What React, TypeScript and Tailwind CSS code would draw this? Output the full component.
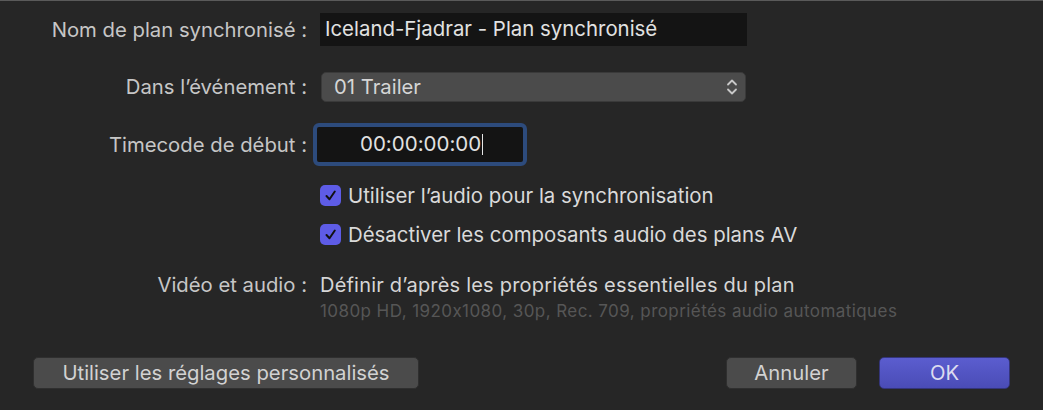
import React from "react";

const font = { fontFamily: "Inter, 'Noto Sans', sans-serif" };

function Label({ children }: { children: React.ReactNode }) {
  return (
    <div className="w-[307px] shrink-0 text-right text-[20.3px] leading-[24px] text-[#c6c6c6]">
      {children}
    </div>
  );
}

function Check({ label }: { label: string }) {
  return (
    <div className="flex h-[21px] items-center pl-[320px]">
      <span className="flex h-[21px] w-[21px] items-center justify-center rounded-[5px] bg-[#5e5ce6]">
        <svg width="13" height="13" viewBox="0 0 13 13" fill="none">
          <path d="M2.5 7l3 3.2L10.8 2.5" stroke="#111" strokeWidth="2" strokeLinecap="round" strokeLinejoin="round" />
        </svg>
      </span>
      <span className="ml-[7px] text-[20.4px] leading-[24px] text-[#dadada]">{label}</span>
    </div>
  );
}

export default function App() {
  return (
    <div
      style={font}
      className="flex h-[410px] w-[1043px] flex-col overflow-hidden border-t border-[#5a5a5a] bg-[#262626] antialiased [font-feature-settings:'calt'_0]"
    >
      {/* Nom de plan */}
      <div className="mt-[12px] flex h-[33px] items-center">
        <Label>Nom de plan synchronisé :</Label>
        <div className="ml-[13px] flex h-[33px] w-[427px] items-center bg-[#141414] px-[5px] text-[20.4px] text-[#e2e2e2]">
          Iceland-Fjadrar - Plan synchronisé
        </div>
      </div>

      {/* Événement */}
      <div className="mt-[26px] flex h-[30px] items-center">
        <Label>Dans l’événement :</Label>
        <div className="ml-[14px] flex h-[30px] w-[425px] items-center justify-between rounded-[5px] border border-[#3a3a3a] bg-[#4b4b4b] pl-[12px] pr-[6px] text-[20.3px] text-[#d6d6d6]">
          <span>01 Trailer</span>
          <svg width="14" height="20" viewBox="0 0 14 20" fill="none">
            <path d="M3 7.5l4-4 4 4M3 12.5l4 4 4-4" stroke="#c8c8c8" strokeWidth="1.8" strokeLinecap="round" strokeLinejoin="round" />
          </svg>
        </div>
      </div>

      {/* Timecode */}
      <div className="mt-[21px] flex h-[43px] items-center">
        <Label>Timecode de début :</Label>
        <div className="ml-[6px] flex h-[43px] w-[214px] items-center rounded-[6px] border-[4px] border-[#2d4b7c] bg-[#141414]">
          <span className="ml-[43px] text-[20.5px] text-[#e2e2e2]">00:00:00:00</span>
          <span className="ml-[1px] h-[21px] w-px bg-[#e6e6e6]" />
        </div>
      </div>

      <div className="mt-[19px]">
        <Check label="Utiliser l’audio pour la synchronisation" />
      </div>
      <div className="mt-[18px]">
        <Check label="Désactiver les composants audio des plans AV" />
      </div>

      {/* Vidéo et audio */}
      <div className="mt-[28px] flex h-[24px] items-center">
        <Label>Vidéo et audio :</Label>
        <div className="ml-[13px] text-[20px] leading-[24px] tracking-[0.01em] text-[#d6d6d6]">
          Définir d’après les propriétés essentielles du plan
        </div>
      </div>
      <div className="mt-[4px] h-[20px] pl-[320px] text-[17px] leading-[20px] tracking-[0.025em] text-[#565656]">
        1080p HD, 1920x1080, 30p, Rec. 709, propriétés audio automatiques
      </div>

      {/* Boutons */}
      <div className="mt-auto mb-[21px] flex items-center px-[33px]">
        <button className="h-[32px] w-[386px] rounded-[5px] border border-[#2f2f2f] bg-[#4b4b4b] text-[20.3px] text-[#d2d2d2]">
          Utiliser les réglages personnalisés
        </button>
        <div className="ml-auto flex gap-[22px]">
          <button className="h-[32px] w-[131px] rounded-[5px] border border-[#2f2f2f] bg-[#4b4b4b] text-[20.3px] text-[#d2d2d2]">
            Annuler
          </button>
          <button className="h-[32px] w-[131px] rounded-[5px] border border-[#34357a] bg-gradient-to-b from-[#5b5dcf] to-[#4a4cb6] text-[20.3px] text-[#dcdcf0]">
            OK
          </button>
        </div>
      </div>
    </div>
  );
}
